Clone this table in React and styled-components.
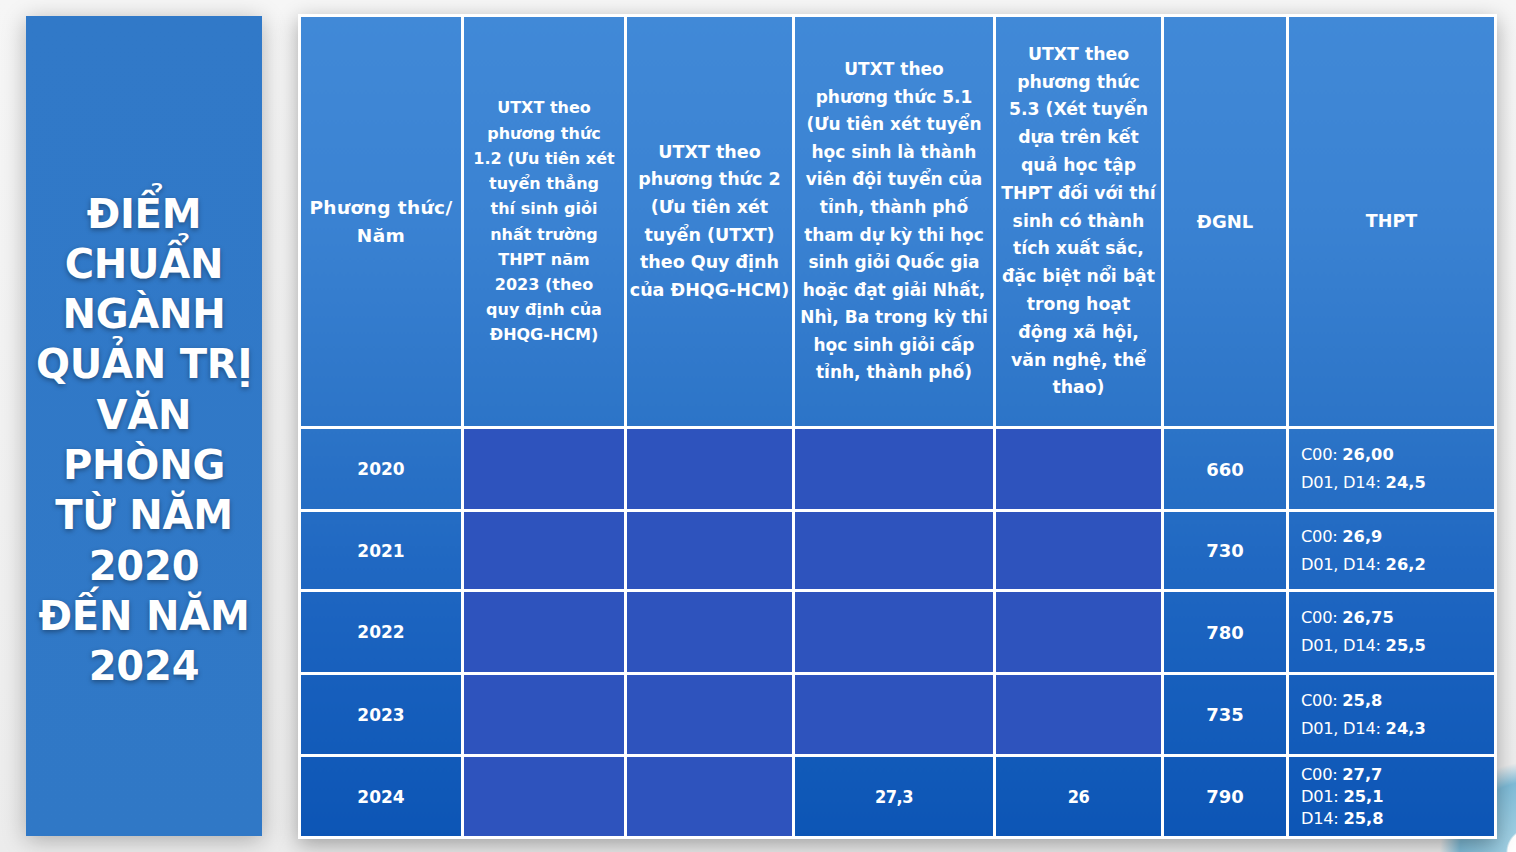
import styled, { createGlobalStyle } from "styled-components";

const GlobalStyle = createGlobalStyle`
  html, body {
    margin: 0;
    padding: 0;
  }
  body {
    font-family: "DejaVu Sans", Verdana, sans-serif;
    background: #efefef;
    overflow: hidden;
  }
`

const Page = styled.div`
  min-height: 100vh;
  box-sizing: border-box;
  display: flex;
  align-items: flex-start;
  gap: 36px;
  padding: 14px 0 0 26px;
  background:
    radial-gradient(circle at 1530px 852px, #ffffff 0 22px, #9fcfe3 24px, #7fbcd8 70px, rgba(160, 205, 225, 0) 90px),
    linear-gradient(180deg, #f6f6f6 0%, #ececec 100%);
`

const TitlePanel = styled.div`
  width: 236px;
  height: 820px;
  margin-top: 2px;
  box-sizing: border-box;
  display: flex;
  align-items: center;
  justify-content: center;
  padding-top: 28px;
  background: linear-gradient(180deg, #3179c8 0%, #3078c6 100%);
  box-shadow: 0 4px 22px rgba(0, 0, 0, 0.28);
`

const Title = styled.h1`
  margin: 0;
  color: #fff;
  font-size: 40px;
  font-weight: 700;
  line-height: 50.3px;
  text-align: center;
  white-space: nowrap;
  letter-spacing: -0.2px;
  text-shadow: 0 2px 5px rgba(0, 0, 0, 0.35);
`

const Table = styled.table`
  width: 1196px;
  height: 822px;
  table-layout: fixed;
  border-collapse: collapse;
  color: #fff;
  background: linear-gradient(180deg, #4189d7 0%, #3a82d2 25%, #2c74c7 50%, #1c64c0 72%, #0c55b5 100%);
  box-shadow: 0 6px 20px rgba(0, 0, 0, 0.32);
`

const Head = styled.th`
  border: 3px solid #fff;
  padding: 0;
  font-size: ${p => p.$size || 17}px;
  line-height: ${p => p.$lh || 27.5}px;
  font-weight: 700;
  text-align: center;
  vertical-align: middle;
  white-space: nowrap;
  letter-spacing: ${p => p.$ls || 0}px;
`

const Cell = styled.td`
  border: 3px solid #fff;
  padding: 0;
  font-size: ${p => p.$size || 17}px;
  font-weight: 700;
  text-align: center;
  vertical-align: middle;
  background: ${p => (p.$empty ? "#2e53bd" : "transparent")};
`

const Score = styled.span`
  font-family: "DejaVu Sans Condensed", "DejaVu Sans", sans-serif;
  font-size: 18px;
  letter-spacing: -0.5px;
`

const ThptCell = styled.td`
  border: 3px solid #fff;
  padding: 0 0 0 12px;
  text-align: left;
  vertical-align: middle;
  font-size: 16.3px;
  line-height: ${p => (p.$compact ? 22 : 28)}px;
  white-space: nowrap;
`

const Label = styled.span`
  font-weight: 400;
  letter-spacing: -0.3px;
`

const Value = styled.span`
  font-weight: 700;
`

const headers = [
  { lines: ["Phương thức/", "Năm"], size: 18.5, lh: 28, ls: 0.4 },
  {
    lines: [
      "UTXT theo",
      "phương thức",
      "1.2 (Ưu tiên xét",
      "tuyển thẳng",
      "thí sinh giỏi",
      "nhất trường",
      "THPT năm",
      "2023 (theo",
      "quy định của",
      "ĐHQG-HCM)",
    ],
    size: 16,
    lh: 25.2,
  },
  {
    lines: [
      "UTXT theo",
      "phương thức 2",
      "(Ưu tiên xét",
      "tuyển (UTXT)",
      "theo Quy định",
      "của ĐHQG-HCM)",
    ],
    size: 17.5,
    lh: 27.6,
  },
  {
    lines: [
      "UTXT theo",
      "phương thức 5.1",
      "(Ưu tiên xét tuyển",
      "học sinh là thành",
      "viên đội tuyển của",
      "tỉnh, thành phố",
      "tham dự kỳ thi học",
      "sinh giỏi Quốc gia",
      "hoặc đạt giải Nhất,",
      "Nhì, Ba trong kỳ thi",
      "học sinh giỏi cấp",
      "tỉnh, thành phố)",
    ],
    size: 17,
    lh: 27.6,
  },
  {
    lines: [
      "UTXT theo",
      "phương thức",
      "5.3 (Xét tuyển",
      "dựa trên kết",
      "quả học tập",
      "THPT đối với thí",
      "sinh có thành",
      "tích xuất sắc,",
      "đặc biệt nổi bật",
      "trong hoạt",
      "động xã hội,",
      "văn nghệ, thể",
      "thao)",
    ],
    size: 17.3,
    lh: 27.8,
  },
  { lines: ["ĐGNL"], size: 18 },
  { lines: ["THPT"], size: 17.5 },
]

const widths = [163, 163, 168, 201, 168, 125, 208]

const rows = [
  { year: "2020", h: 83, dgnl: "660", thpt: [["C00:", "26,00"], ["D01, D14:", "24,5"]] },
  { year: "2021", h: 80, dgnl: "730", thpt: [["C00:", "26,9"], ["D01, D14:", "26,2"]] },
  { year: "2022", h: 83, dgnl: "780", thpt: [["C00:", "26,75"], ["D01, D14:", "25,5"]] },
  { year: "2023", h: 82, dgnl: "735", thpt: [["C00:", "25,8"], ["D01, D14:", "24,3"]] },
  {
    year: "2024",
    h: 82,
    m51: "27,3",
    m53: "26",
    dgnl: "790",
    thpt: [["C00:", "27,7"], ["D01:", "25,1"], ["D14:", "25,8"]],
    compact: true,
  },
]

const App = () => {
  return (
    <Page>
      <GlobalStyle />
      <TitlePanel>
        <Title>
          ĐIỂM
          <br />
          CHUẨN
          <br />
          NGÀNH
          <br />
          QUẢN TRỊ
          <br />
          VĂN
          <br />
          PHÒNG
          <br />
          TỪ NĂM
          <br />
          2020
          <br />
          ĐẾN NĂM
          <br />
          2024
        </Title>
      </TitlePanel>
      <Table>
        <colgroup>
          {widths.map((w, i) => (
            <col key={i} style={{ width: w }} />
          ))}
        </colgroup>
        <thead>
          <tr style={{ height: 412 }}>
            {headers.map((h, i) => (
              <Head key={i} $size={h.size} $lh={h.lh} $ls={h.ls}>
                {h.lines.map((l, j) => (
                  <div key={j}>{l}</div>
                ))}
              </Head>
            ))}
          </tr>
        </thead>
        <tbody>
          {rows.map((r) => (
            <tr key={r.year} style={{ height: r.h }}>
              <Cell>{r.year}</Cell>
              <Cell $empty />
              <Cell $empty />
              <Cell $empty={!r.m51}>{r.m51 && <Score>{r.m51}</Score>}</Cell>
              <Cell $empty={!r.m53}>{r.m53 && <Score>{r.m53}</Score>}</Cell>
              <Cell $size={18}>{r.dgnl}</Cell>
              <ThptCell $compact={r.compact}>
                {r.thpt.map(([label, value]) => (
                  <div key={label}>
                    <Label>{label} </Label>
                    <Value>{value}</Value>
                  </div>
                ))}
              </ThptCell>
            </tr>
          ))}
        </tbody>
      </Table>
    </Page>
  );
};

export default App;
